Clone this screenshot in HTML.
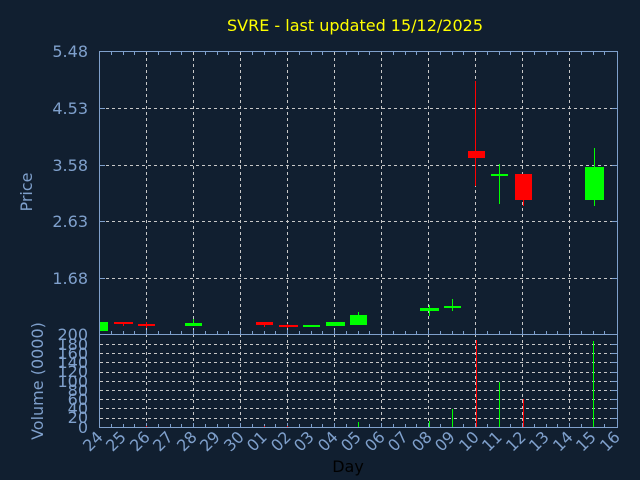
<!DOCTYPE html>
<html><head><meta charset="utf-8"><style>
html,body{margin:0;padding:0;background:#111f30;}
svg{display:block;}
text{font-family:"DejaVu Sans","Liberation Sans",sans-serif;}
</style></head><body>
<svg width="640" height="480" viewBox="0 0 640 480" xmlns="http://www.w3.org/2000/svg">
<rect width="640" height="480" fill="#111f30"/>
<text x="355" y="31" fill="#ffff00" font-size="16" text-anchor="middle">SVRE - last updated 15/12/2025</text>
<g stroke="#c8c8c8" stroke-width="1" stroke-dasharray="3,3" fill="none">
<path d="M146.5 52V427M193.5 52V427M240.5 52V427M287.5 52V427M334.5 52V427M381.5 52V427M428.5 52V427M475.5 52V427M522.5 52V427M569.5 52V427"/>
<path d="M100 108.5H617M100 165.5H617M100 221.5H617M100 278.5H617"/>
<path d="M100 344.5H617M100 353.5H617M100 362.5H617M100 372.5H617M100 381.5H617M100 390.5H617M100 399.5H617M100 408.5H617M100 418.5H617"/>
</g>
<g stroke="#7fa0cc" stroke-width="1" fill="none">
<rect x="99.5" y="51.5" width="518" height="283"/>
<rect x="99.5" y="334.5" width="518" height="93"/>
<path d="M111.5 52v3M123.5 52v3M134.5 52v3M158.5 52v3M170.5 52v3M181.5 52v3M205.5 52v3M217.5 52v3M228.5 52v3M252.5 52v3M264.5 52v3M275.5 52v3M299.5 52v3M311.5 52v3M322.5 52v3M346.5 52v3M358.5 52v3M369.5 52v3M393.5 52v3M405.5 52v3M416.5 52v3M440.5 52v3M452.5 52v3M463.5 52v3M487.5 52v3M499.5 52v3M510.5 52v3M534.5 52v3M546.5 52v3M557.5 52v3M581.5 52v3M593.5 52v3M604.5 52v3"/>
<path d="M111.5 334v-3M123.5 334v-3M134.5 334v-3M146.5 334v-4M158.5 334v-3M170.5 334v-3M181.5 334v-3M193.5 334v-4M205.5 334v-3M217.5 334v-3M228.5 334v-3M240.5 334v-4M252.5 334v-3M264.5 334v-3M275.5 334v-3M287.5 334v-4M299.5 334v-3M311.5 334v-3M322.5 334v-3M334.5 334v-4M346.5 334v-3M358.5 334v-3M369.5 334v-3M381.5 334v-4M393.5 334v-3M405.5 334v-3M416.5 334v-3M428.5 334v-4M440.5 334v-3M452.5 334v-3M463.5 334v-3M475.5 334v-4M487.5 334v-3M499.5 334v-3M510.5 334v-3M522.5 334v-4M534.5 334v-3M546.5 334v-3M557.5 334v-3M569.5 334v-4M581.5 334v-3M593.5 334v-3M604.5 334v-3"/>
<path d="M111.5 427v-3M123.5 427v-3M134.5 427v-3M146.5 427v-4M158.5 427v-3M170.5 427v-3M181.5 427v-3M193.5 427v-4M205.5 427v-3M217.5 427v-3M228.5 427v-3M240.5 427v-4M252.5 427v-3M264.5 427v-3M275.5 427v-3M287.5 427v-4M299.5 427v-3M311.5 427v-3M322.5 427v-3M334.5 427v-4M346.5 427v-3M358.5 427v-3M369.5 427v-3M381.5 427v-4M393.5 427v-3M405.5 427v-3M416.5 427v-3M428.5 427v-4M440.5 427v-3M452.5 427v-3M463.5 427v-3M475.5 427v-4M487.5 427v-3M499.5 427v-3M510.5 427v-3M522.5 427v-4M534.5 427v-3M546.5 427v-3M557.5 427v-3M569.5 427v-4M581.5 427v-3M593.5 427v-3M604.5 427v-3"/>
<path d="M100 108.5h5M100 165.5h5M100 221.5h5M100 278.5h5M617 108.5h-5M617 165.5h-5M617 221.5h-5M617 278.5h-5"/>
<path d="M611 344.5h6M611 353.5h6M611 362.5h6M611 372.5h6M611 381.5h6M611 390.5h6M611 399.5h6M611 408.5h6M611 418.5h6"/>
</g>
<g fill="#7fa0cc" font-size="16" text-anchor="end">
<text x="88" y="57">5.48</text>
<text x="88" y="114">4.53</text>
<text x="88" y="171">3.58</text>
<text x="88" y="227">2.63</text>
<text x="88" y="284">1.68</text>
<text x="88" y="340">200</text>
<text x="88" y="350">180</text>
<text x="88" y="359">160</text>
<text x="88" y="368">140</text>
<text x="88" y="377">120</text>
<text x="88" y="387">100</text>
<text x="88" y="396">80</text>
<text x="88" y="405">60</text>
<text x="88" y="414">40</text>
<text x="88" y="423">20</text>
<text x="88" y="433">0</text>
</g>
<text transform="translate(32,192) rotate(-90)" fill="#7fa0cc" font-size="16" text-anchor="middle">Price</text>
<text transform="translate(43,381) rotate(-90)" fill="#7fa0cc" font-size="16" text-anchor="middle">Volume (0000)</text>
<g fill="#7fa0cc" font-size="16" text-anchor="end">
<text transform="translate(104,438) rotate(-45)">24</text>
<text transform="translate(127,438) rotate(-45)">25</text>
<text transform="translate(151,438) rotate(-45)">26</text>
<text transform="translate(174,438) rotate(-45)">27</text>
<text transform="translate(198,438) rotate(-45)">28</text>
<text transform="translate(221,438) rotate(-45)">29</text>
<text transform="translate(245,438) rotate(-45)">30</text>
<text transform="translate(268,438) rotate(-45)">01</text>
<text transform="translate(292,438) rotate(-45)">02</text>
<text transform="translate(315,438) rotate(-45)">03</text>
<text transform="translate(339,438) rotate(-45)">04</text>
<text transform="translate(362,438) rotate(-45)">05</text>
<text transform="translate(386,438) rotate(-45)">06</text>
<text transform="translate(409,438) rotate(-45)">07</text>
<text transform="translate(433,438) rotate(-45)">08</text>
<text transform="translate(456,438) rotate(-45)">09</text>
<text transform="translate(480,438) rotate(-45)">10</text>
<text transform="translate(503,438) rotate(-45)">11</text>
<text transform="translate(527,438) rotate(-45)">12</text>
<text transform="translate(550,438) rotate(-45)">13</text>
<text transform="translate(574,438) rotate(-45)">14</text>
<text transform="translate(597,438) rotate(-45)">15</text>
<text transform="translate(621,438) rotate(-45)">16</text>
</g>
<text x="348" y="472" fill="#000000" font-size="16" text-anchor="middle">Day</text>
<!-- candles -->
<g>
<rect x="100" y="322" width="8" height="9" fill="#00ff00"/>
<rect x="114" y="322" width="19" height="2" fill="#ff0000"/><rect x="123" y="322" width="1" height="4" fill="#ff0000"/>
<rect x="138" y="324" width="17" height="2" fill="#ff0000"/><rect x="146" y="322" width="1" height="6" fill="#ff0000"/>
<rect x="185" y="323" width="17" height="3" fill="#00ff00"/><rect x="193" y="319" width="1" height="4" fill="#00ff00"/>
<rect x="256" y="322" width="17" height="3" fill="#ff0000"/><rect x="264" y="322" width="1" height="5" fill="#ff0000"/>
<rect x="279" y="325" width="19" height="2" fill="#ff0000"/><rect x="287" y="324" width="1" height="4" fill="#ff0000"/>
<rect x="303" y="325" width="17" height="2" fill="#00ff00"/>
<rect x="326" y="322" width="19" height="4" fill="#00ff00"/>
<rect x="350" y="315" width="17" height="10" fill="#00ff00"/><rect x="358" y="312" width="1" height="3" fill="#00ff00"/>
<rect x="420" y="308" width="19" height="3" fill="#00ff00"/><rect x="429" y="305" width="1" height="11" fill="#00ff00"/>
<rect x="444" y="306" width="17" height="2" fill="#00ff00"/><rect x="452" y="299" width="1" height="12" fill="#00ff00"/>
<rect x="475" y="81" width="1" height="105" fill="#ff0000"/><rect x="468" y="151" width="17" height="7" fill="#ff0000"/>
<rect x="499" y="164" width="1" height="40" fill="#00ff00"/><rect x="491" y="174" width="17" height="2" fill="#00ff00"/>
<rect x="515" y="174" width="17" height="26" fill="#ff0000"/><rect x="523" y="200" width="1" height="6" fill="#ff0000"/>
<rect x="594" y="148" width="1" height="58" fill="#00ff00"/><rect x="585" y="167" width="19" height="33" fill="#00ff00"/>
</g>
<!-- volume -->
<g>
<rect x="358" y="422" width="1" height="5" fill="#00ff00"/>
<rect x="429" y="421" width="1" height="6" fill="#00ff00"/>
<rect x="452" y="409" width="1" height="18" fill="#00ff00"/>
<rect x="476" y="340" width="1" height="87" fill="#ff0000"/>
<rect x="499" y="382" width="1" height="45" fill="#00ff00"/>
<rect x="523" y="399" width="1" height="28" fill="#ff0000"/>
<rect x="593" y="341" width="1" height="86" fill="#00ff00"/>
<rect x="146" y="426" width="1" height="1" fill="#ff0000"/>
<rect x="264" y="426" width="1" height="1" fill="#ff0000"/>
<rect x="287" y="426" width="1" height="1" fill="#ff0000"/>
</g>
</svg>
</body></html>
